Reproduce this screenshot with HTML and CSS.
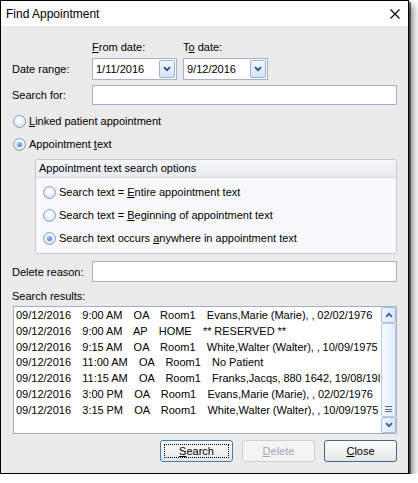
FILE: index.html
```html
<!DOCTYPE html>
<html lang="en">
<head>
    <meta charset="UTF-8">
    <title>Find Appointment</title>
    <link rel="stylesheet" href="styles.css">
</head>
<body>

    <div class="window">
        <div class="titlebar">
            <span class="title">Find Appointment</span>
            <svg class="close-x" width="10" height="10" viewBox="0 0 10 10">
                <path d="M0.5 0.5 L9.5 9.5 M9.5 0.5 L0.5 9.5" stroke="#000" stroke-width="1.1" fill="none"/>
            </svg>
        </div>

        <div class="content">
            <div class="date-heads">
                <span><u>F</u>rom date:</span>
                <span>T<u>o</u> date:</span>
            </div>

            <div class="field-row date-row">
                <span class="label">Date range:</span>
                <div class="combo">
                    <span class="combo-text">1/11/2016</span>
                    <span class="drop-btn">
                        <svg width="8" height="6" viewBox="0 0 8 6"><path d="M1 1.2 L4 4.2 L7 1.2" stroke="#2b4a78" stroke-width="1.7" fill="none"/></svg>
                    </span>
                </div>
                <div class="combo">
                    <span class="combo-text">9/12/2016</span>
                    <span class="drop-btn">
                        <svg width="8" height="6" viewBox="0 0 8 6"><path d="M1 1.2 L4 4.2 L7 1.2" stroke="#2b4a78" stroke-width="1.7" fill="none"/></svg>
                    </span>
                </div>
            </div>

            <div class="field-row search-row">
                <span class="label">Search for:</span>
                <div class="text-input"></div>
            </div>

            <div class="option first">
                <span class="radio"></span>
                <span><u>L</u>inked patient appointment</span>
            </div>
            <div class="option">
                <span class="radio on"></span>
                <span>Appointment <u>t</u>ext</span>
            </div>

            <div class="group">
                <div class="group-head">Appointment text search options</div>
                <div class="group-body">
                    <div class="option">
                        <span class="radio"></span>
                        <span>Search text = <u>E</u>ntire appointment text</span>
                    </div>
                    <div class="option">
                        <span class="radio"></span>
                        <span>Search text = <u>B</u>eginning of appointment text</span>
                    </div>
                    <div class="option">
                        <span class="radio on"></span>
                        <span>Search text occurs <u>a</u>nywhere in appointment text</span>
                    </div>
                </div>
            </div>

            <div class="field-row delete-row">
                <span class="label">Delete reason:</span>
                <div class="text-input"></div>
            </div>

            <div class="results-label">Search results:</div>

            <div class="list">
                <div class="rows">
                    <div class="row">09/12/2016    9:00 AM    OA    Room1    Evans,Marie (Marie), , 02/02/1976</div>
                    <div class="row">09/12/2016    9:00 AM    AP    HOME    ** RESERVED **</div>
                    <div class="row">09/12/2016    9:15 AM    OA    Room1    White,Walter (Walter), , 10/09/1975</div>
                    <div class="row">09/12/2016    11:00 AM    OA    Room1    No Patient</div>
                    <div class="row">09/12/2016    11:15 AM    OA    Room1    Franks,Jacqs, 880 1642, 19/08/1980</div>
                    <div class="row">09/12/2016    3:00 PM    OA    Room1    Evans,Marie (Marie), , 02/02/1976</div>
                    <div class="row">09/12/2016    3:15 PM    OA    Room1    White,Walter (Walter), , 10/09/1975</div>
                </div>
                <div class="scrollbar">
                    <span class="sb-btn">
                        <svg width="8" height="6" viewBox="0 0 8 6"><path d="M1 4.8 L4 1.8 L7 4.8" stroke="#3d5a86" stroke-width="1.7" fill="none"/></svg>
                    </span>
                    <span class="sb-thumb">
                        <span class="grip"></span>
                    </span>
                    <span class="sb-btn">
                        <svg width="8" height="6" viewBox="0 0 8 6"><path d="M1 1.2 L4 4.2 L7 1.2" stroke="#3d5a86" stroke-width="1.7" fill="none"/></svg>
                    </span>
                </div>
            </div>

            <div class="buttons">
                <button class="btn default"><u>S</u>earch</button>
                <button class="btn" disabled><u>D</u>elete</button>
                <button class="btn dark"><u>C</u>lose</button>
            </div>
        </div>
    </div>

</body>
</html>
```

FILE: styles.css
```css
* {
    box-sizing: border-box;
}

body {
    margin: 0;
    background: #fff;
    font-family: "Liberation Sans", Arial, sans-serif;
    font-size: 11px;
    color: #000;
}

.window {
    width: 409px;
    height: 474px;
    border: 1px solid #000;
    background: #ebebeb;
    box-shadow: 2px 2px 0 rgba(0, 0, 0, 0.55), 5px 5px 6px rgba(0, 0, 0, 0.4);
}

.titlebar {
    height: 25px;
    background: #fff;
    display: flex;
    align-items: center;
    justify-content: space-between;
    padding: 0 8px 0 5px;
    font-size: 12px;
}

.content {
    padding: 14px 11px 0 11px;
}

u {
    text-decoration: underline;
    text-underline-offset: 1px;
}

.date-heads {
    display: flex;
    padding-left: 80px;
    line-height: 14px;
}

.date-heads span {
    width: 91px;
}

.field-row {
    display: flex;
    align-items: center;
}

.field-row .label {
    width: 80px;
    flex-shrink: 0;
}

.date-row {
    margin-top: 4px;
    height: 22px;
}

.combo {
    width: 85px;
    height: 22px;
    margin-right: 6px;
    border: 1px solid #a9aed2;
    background: #fff;
    display: flex;
    align-items: center;
    justify-content: space-between;
    padding: 0 1px 0 3px;
}

.drop-btn {
    width: 16px;
    height: 18px;
    border: 1px solid #98b4d8;
    border-radius: 2px;
    background: linear-gradient(#f1f7fe, #d3e4f6);
    display: flex;
    align-items: center;
    justify-content: center;
}

.text-input {
    flex: 1;
    height: 100%;
    border: 1px solid #a9aed2;
    background: #fff;
}

.search-row {
    margin-top: 5px;
    height: 20px;
}

.option {
    display: flex;
    align-items: center;
    gap: 3px;
    height: 16px;
    margin-top: 7px;
}

.option.first {
    margin-top: 8px;
}

.content > .option .radio {
    margin-left: 1px;
}

.radio {
    position: relative;
    width: 13px;
    height: 13px;
    border-radius: 50%;
    border: 1px solid #8a9dbf;
    background: radial-gradient(circle at 50% 35%, #ffffff 10%, #e4ecf6 55%, #c6d5ea);
}

.radio.on::after {
    content: "";
    position: absolute;
    left: 3px;
    top: 3px;
    width: 5px;
    height: 5px;
    border-radius: 50%;
    background: radial-gradient(circle at 40% 35%, #9ccaf7, #2a63b6);
}

.group {
    margin: 7px 0 0 23px;
    height: 95px;
    border: 1px solid #c2c8d8;
    border-radius: 3px;
    background: #f9f9fb;
    overflow: hidden;
}

.group-head {
    height: 18px;
    line-height: 17px;
    padding-left: 3px;
    background: linear-gradient(#f4f6fa, #e8ebf2);
    border-bottom: 1px solid #d2d7e3;
}

.group-body {
    padding: 6px 0 0 7px;
}

.group-body .option:first-child {
    margin-top: 0;
}

.delete-row {
    margin-top: 7px;
    height: 21px;
}

.results-label {
    margin-top: 7px;
    line-height: 14px;
}

.list {
    margin: 3px 0 0 1px;
    height: 128px;
    border: 1px solid #a3abc6;
    background: #fff;
    display: flex;
}

.rows {
    flex: 1;
    min-width: 0;
    overflow: hidden;
    padding: 1px 0 0 2px;
}

.row {
    white-space: pre;
    word-spacing: -0.25px;
    line-height: 15.8px;
}

.scrollbar {
    width: 16px;
    flex-shrink: 0;
    display: flex;
    flex-direction: column;
    padding: 0 0 0 1px;
}

.sb-btn {
    height: 16px;
    border: 1px solid #a9c0de;
    border-radius: 2px;
    background: linear-gradient(90deg, #eef5fd, #d8e7f7);
    display: flex;
    align-items: center;
    justify-content: center;
}

.sb-thumb {
    flex: 1;
    border: 1px solid #b9cce5;
    border-radius: 2px;
    background: linear-gradient(90deg, #f6faff, #e1ecf9);
    display: flex;
    align-items: flex-end;
    justify-content: center;
    padding-bottom: 4px;
}

.grip {
    width: 7px;
    height: 6px;
    border-top: 1px solid #4d6a92;
    border-bottom: 1px solid #4d6a92;
    background: linear-gradient(#4d6a92, #4d6a92) center / 100% 1px no-repeat;
}

.buttons {
    margin-top: 6px;
    display: flex;
    justify-content: flex-end;
    gap: 9px;
}

.btn {
    position: relative;
    width: 73px;
    height: 22px;
    font-family: "Liberation Sans", Arial, sans-serif;
    font-size: 11px;
    color: #000;
    border: 1px solid #707070;
    border-radius: 3px;
    background: linear-gradient(#fdfdfd, #f1f1f1 50%, #e6e6e6);
    padding: 0;
}

.btn.default {
    border-color: #3c7fb1;
}

.btn.default::after {
    content: "";
    position: absolute;
    left: 3px;
    top: 3px;
    right: 3px;
    bottom: 3px;
    border: 1px dotted #000;
}

.btn.dark {
    border-color: #47648d;
}

.btn:disabled {
    border-color: #cfcfcf;
    background: #f4f4f4;
    color: #a2a6c4;
}
```
